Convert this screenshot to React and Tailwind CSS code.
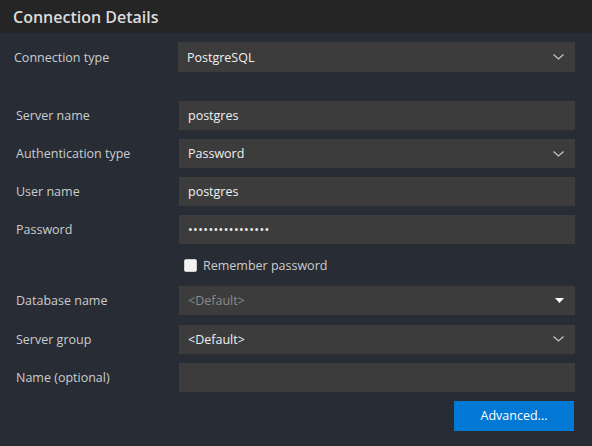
const font = { fontFamily: '"Open Sans", "Noto Sans", sans-serif' };

function Chevron() {
  return (
    <svg width="11" height="6" viewBox="0 0 11 6" className="shrink-0">
      <path d="M0.5 0.5 L5.5 5 L10.5 0.5" fill="none" stroke="#c5c5c5" strokeWidth="1.2" />
    </svg>
  );
}

function Triangle() {
  return (
    <svg width="9" height="5" viewBox="0 0 9 5" className="shrink-0">
      <path d="M0 0 H9 L4.5 5 Z" fill="#ffffff" />
    </svg>
  );
}

function Row({ label, children, labelClass = "pl-4" }) {
  return (
    <div className="flex items-center">
      <div className={`w-[178px] shrink-0 pt-[2px] text-[12.5px] text-[#cccccc] ${labelClass}`}>{label}</div>
      {children}
    </div>
  );
}

function Field({ value, placeholder, select, dim, wide, dots }) {
  return (
    <div
      className={`flex items-center justify-between bg-[#3c3c3c] pl-[9px] pr-[11px] ${
        wide ? "h-[30px] w-[397px]" : "h-[29px] w-[396px] ml-px"
      }`}
    >
      <span
        className={`pt-[2px] text-[12.5px] ${dim ? "text-[#8a8a8a]" : "text-[#f0f0f0]"} ${
          dots ? "tracking-[0.4px]" : ""
        }`}
      >
        {value || placeholder}
      </span>
      {select === "chevron" && <Chevron />}
      {select === "triangle" && <Triangle />}
    </div>
  );
}

export default function App() {
  return (
    <div className="w-[592px] h-[446px] bg-[#282c35] flex flex-col" style={font}>
      {/* Header */}
      <div className="h-[33px] bg-[#252526] flex items-center pl-[13px]">
        <h2 className="text-[16px] font-semibold text-[#dcdcdc]">Connection Details</h2>
      </div>

      <div className="flex flex-col pt-[9px]">
        <Row label="Connection type" labelClass="pl-[14px]">
          <Field value="PostgreSQL" select="chevron" wide />
        </Row>

        <div className="flex flex-col gap-[9px] mt-[29px]">
          <Row label="Server name">
            <Field value="postgres" />
          </Row>
          <Row label="Authentication type">
            <Field value="Password" select="chevron" />
          </Row>
          <Row label="User name">
            <Field value="postgres" />
          </Row>
          <Row label="Password">
            <Field value="••••••••••••••••" dots />
          </Row>
        </div>

        <label className="flex items-center h-[14px] ml-[184px] mt-[14px] gap-[6px]">
          <span className="w-[13px] h-[13px] rounded-[2px] bg-[#f3f3f3] border border-[#cfcfcf]" />
          <span className="pt-[2px] text-[12.5px] text-[#cccccc]">Remember password</span>
        </label>

        <div className="flex flex-col gap-[9.5px] mt-[14px]">
          <Row label="Database name">
            <Field placeholder="<Default>" dim select="triangle" />
          </Row>
          <Row label="Server group">
            <Field value="<Default>" select="chevron" />
          </Row>
          <Row label="Name (optional)">
            <Field value="" />
          </Row>
        </div>

        <div className="flex justify-end pr-[18px] mt-[9px]">
          <button className="w-[120px] h-[30px] pt-[1px] bg-[#0078d4] text-white text-[12.5px]">Advanced...</button>
        </div>
      </div>
    </div>
  );
}
